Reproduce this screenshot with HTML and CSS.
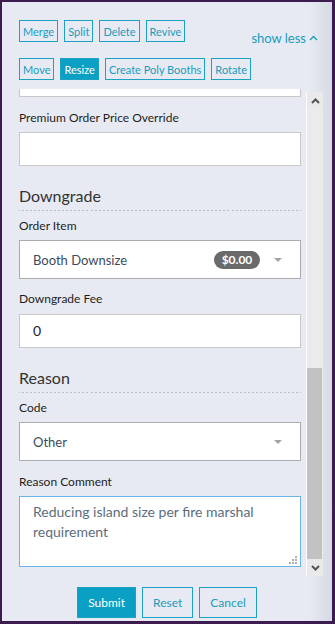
FILE: index.html
```html
<!DOCTYPE html>
<html lang="en">
<head>
  <meta charset="UTF-8">
  <title>Booth Downgrade</title>
  <link rel="stylesheet" href="styles.css">
</head>
<body>

<div class="panel">
  <!-- ========= TOOLBAR ========= -->
  <div class="toolbar">
    <div class="tool-rows">
      <div class="tool-row">
        <button class="tool">Merge</button>
        <button class="tool">Split</button>
        <button class="tool">Delete</button>
        <button class="tool">Revive</button>
      </div>
      <div class="tool-row">
        <button class="tool">Move</button>
        <button class="tool active">Resize</button>
        <button class="tool">Create Poly Booths</button>
        <button class="tool">Rotate</button>
      </div>
    </div>
    <a class="toggle" href="#">show less
      <svg width="9" height="6" viewBox="0 0 9 6"><path d="M1 5 L4.5 1.5 L8 5" fill="none" stroke="#1a9cc0" stroke-width="1.3"/></svg>
    </a>
  </div>

  <!-- ========= FORM (scrolled) ========= -->
  <div class="scroller">
    <div class="scroll-view">
      <form class="form">
        <div class="input"></div>

        <label class="label">Premium Order Price Override</label>
        <div class="input"></div>

        <h2 class="section">Downgrade</h2>
        <label class="label first">Order Item</label>
        <div class="select">
          <span>Booth Downsize</span>
          <span class="badge">$0.00</span>
          <span class="caret"></span>
        </div>

        <label class="label tight">Downgrade Fee</label>
        <div class="input value">0</div>

        <h2 class="section">Reason</h2>
        <label class="label first">Code</label>
        <div class="select">
          <span>Other</span>
          <span class="caret"></span>
        </div>

        <label class="label">Reason Comment</label>
        <div class="comment">
          <textarea>Reducing island size per fire marshal requirement</textarea>
          <svg class="grip" width="9" height="8" viewBox="0 0 9 8">
            <rect x="6" y="0" width="2" height="2" fill="#b0b0b0"/>
            <rect x="3" y="3" width="2" height="2" fill="#b0b0b0"/>
            <rect x="6" y="3" width="2" height="2" fill="#b0b0b0"/>
            <rect x="0" y="6" width="2" height="2" fill="#b0b0b0"/>
            <rect x="3" y="6" width="2" height="2" fill="#b0b0b0"/>
            <rect x="6" y="6" width="2" height="2" fill="#b0b0b0"/>
          </svg>
        </div>
      </form>
    </div>

    <div class="scrollbar">
      <div class="sb-btn">
        <svg width="9" height="6" viewBox="0 0 9 6"><path d="M1 5 L4.5 1.5 L8 5" fill="none" stroke="#555" stroke-width="2"/></svg>
      </div>
      <div class="sb-track"><div class="sb-thumb"></div></div>
      <div class="sb-btn">
        <svg width="9" height="6" viewBox="0 0 9 6"><path d="M1 1 L4.5 4.5 L8 1" fill="none" stroke="#555" stroke-width="2"/></svg>
      </div>
    </div>
  </div>

  <!-- ========= ACTIONS ========= -->
  <div class="actions">
    <button class="btn primary">Submit</button>
    <button class="btn">Reset</button>
    <button class="btn">Cancel</button>
  </div>
</div>

</body>
</html>
```

FILE: styles.css
```css
/* ---------- Base ---------- */
html, body {
  margin: 0;
  padding: 0;
  font-family: Lato, "Open Sans", sans-serif;
  color: #222;
}

.panel {
  box-sizing: border-box;
  width: 335px;
  height: 624px;
  border-style: solid;
  border-color: #3c1b4e;
  border-width: 2px 3px 3px 2px;
  background: linear-gradient(to right, #e7eaf2 0, #e7eaf2 93%, #d6dae4 100%);
  display: flex;
  flex-direction: column;
}

/* Toolbar */
.toolbar { display: flex; justify-content: space-between; padding: 18px 14px 0 17px; }
.tool-rows { display: flex; flex-direction: column; gap: 16px; }
.tool-row { display: flex; gap: 6px; }
.tool {
  height: 22px;
  padding: 0 3px;
  border: 1px solid #1ba2c5;
  background: transparent;
  color: #1a9cc0;
  font-family: inherit;
  font-size: 11px;
  white-space: nowrap;
}
.tool.active { background: #0aa0c3; color: #fff; }

.toggle {
  flex-shrink: 0;
  margin-top: 10px;
  height: 16px;
  line-height: 16px;
  font-size: 13px;
  color: #1a9cc0;
  text-decoration: none;
  white-space: nowrap;
  display: flex;
  align-items: center;
  gap: 3px;
}

/* Scroll area */
.scroller { display: flex; height: 490px; margin-top: 9px; }
.scroll-view { flex: 1; overflow: hidden; padding: 0 5px 0 17px; }
.form { margin-top: -26px; display: flex; flex-direction: column; }

.label { font-size: 12px; line-height: 16px; margin: 13px 0 6px; color: #1e1e1e; }
.label.first { margin-top: 7px; }
.label.tight { margin-top: 12px; margin-bottom: 7px; }

.input {
  box-sizing: border-box;
  height: 34px;
  background: #fff;
  border: 1px solid #c8c8c8;
}
.input.value { padding-left: 13px; line-height: 32px; font-size: 14px; color: #222; }

.section {
  margin: 19px 0 0;
  padding-bottom: 3px;
  font-size: 16px;
  line-height: 22px;
  font-weight: normal;
  color: #333;
  border-bottom: 1px solid transparent;
  border-image: repeating-linear-gradient(to right, #b9bdc6 0 2px, transparent 2px 4px) 1;
}

.select {
  box-sizing: border-box;
  height: 39px;
  display: flex;
  align-items: center;
  padding: 0 18px 0 13px;
  background: #fff;
  border: 1px solid #acacac;
  font-size: 13px;
  color: #3a4b5c;
}
.badge {
  margin-left: auto;
  width: 46px;
  height: 18px;
  line-height: 18px;
  border-radius: 9px;
  background: #6a6a6a;
  color: #fff;
  font-size: 12px;
  font-weight: bold;
  text-align: center;
}
.caret {
  margin-left: 14px;
  border-left: 4px solid transparent;
  border-right: 4px solid transparent;
  border-top: 4px solid #a3a3a3;
}
.select span:first-child + .caret { margin-left: auto; }

.comment { position: relative; }
.comment textarea {
  display: block;
  box-sizing: border-box;
  width: 100%;
  height: 71px;
  margin: 0;
  padding: 5px 13px;
  border: 1px solid #6db5e8;
  background: #fff;
  resize: none;
  outline: none;
  font-family: inherit;
  font-size: 14px;
  line-height: 20px;
  color: #5b6d7d;
}
.grip { position: absolute; right: 3px; bottom: 3px; }

/* Fake scrollbar */
.scrollbar {
  width: 16px;
  margin: 3px 9px 3px 0;
  border-left: 1px solid #fff;
  background: #ebebeb;
  display: flex;
  flex-direction: column;
}
.sb-btn { height: 17px; display: flex; align-items: center; justify-content: center; background: #e9e9e9; }
.sb-track { flex: 1; display: flex; flex-direction: column; justify-content: flex-end; }
.sb-thumb { height: 191px; background: #c2c2c2; margin-right: 1px; }

/* Bottom buttons */
.actions { display: flex; justify-content: center; gap: 6px; padding-top: 8px; }
.btn {
  height: 31px;
  padding: 0 10px;
  border: 1px solid #1ba2c5;
  background: transparent;
  color: #1a9cc0;
  font-family: inherit;
  font-size: 12px;
}
.btn.primary { background: #0aa0c3; color: #fff; padding: 0 10px; }
```
